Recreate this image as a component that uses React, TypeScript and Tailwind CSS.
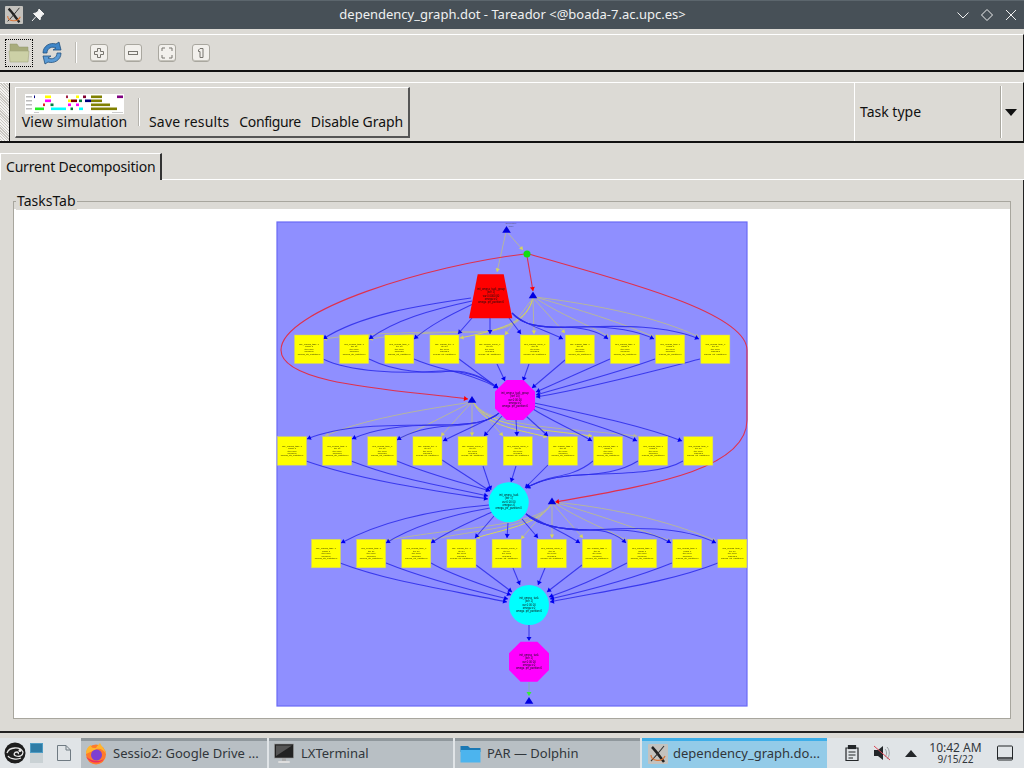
import React from "react";

const BLUE = "#2a2aea";
const GREY = "#b5b5a0";
const YEL = "#d6d65a";
const RED = "#e0304c";

const row1 = Array.from({ length: 10 }, (_, i) => 294.5 + i * 45.15);
const row2 = Array.from({ length: 10 }, (_, i) => 277.5 + i * 45.15);
const row3 = Array.from({ length: 10 }, (_, i) => 311.5 + i * 45.15);

const labels = [
  ["lib1_ompss_task_0", "'class' 1", "iter 0000", "omega:s", "omega_ptr_partition:0"],
  ["lib1_ompss_task_0", "iter 10", "iter 0000", "omega:s", "omega_ptr_partition:0"],
  ["lib1_ompss_task_0", "iter 10", "iter 0000", "omega:s", "omega_ptr_partition:0"],
  ["lib1_ompss_iter_1", "iter 10", "iter 0000", "omega:s", "omega_ptr_partition:0"],
  ["lib1_ompss_comp_0", "iter 10", "iter 0000", "omega:s", "omega_ptr_partition:0"],
  ["lib1_ompss_comp_0", "iter 10", "iter 0000", "omega:s", "omega_ptr_partition:0"],
  ["lib1_ompss_task_0", "iter 10", "iter 0000", "omega:s", "omega_ptr_partition:0"],
  ["lib1_ompss_task_0", "'class' 1", "iter 0000", "omega:s", "omega_ptr_partition:0"],
  ["lib1_ompss_task_0", "'class' 1", "iter 0000", "omega:s", "omega_ptr_partition:0"],
  ["lib1_ompss_task_0", "iter 10", "iter 0000", "omega:s", "omega_ptr_partition:0"],
];

const blueEdges = [
  // trapezoid to row 1
  "M471 298 C420 305 360 315 323 339",
  "M472 301 C430 310 395 320 369 339",
  "M473 304 C450 315 430 325 414 339",
  "M472 318 L458 334",
  "M490 318 L490 334",
  "M509 318 L521 334",
  "M512 313 C525 325 545 330 563 339",
  "M512 313 C522 325 540 328 560 327 C580 327 597 330 608 339",
  "M512 313 C522 325 540 328 570 327 C600 326 632 328 654 339",
  "M512 313 C522 325 540 328 570 327 C600 327 660 322 699 339",
  // row 1 to magenta
  "M323 359 C350 372 400 374 440 371 C465 370 485 378 498 388",
  "M369 359 C395 372 430 374 450 371 C470 370 485 378 498 388",
  "M414 359 C440 371 470 372 498 388",
  "M459 359 L498 388",
  "M497 364 L505 381",
  "M529 364 L523 381",
  "M565 360 L532 388",
  "M610 359 L536 392",
  "M655 359 C620 372 570 385 536 395",
  "M700 359 C650 372 590 388 536 397",
  // magenta to row 2
  "M499 413 C490 422 470 425 440 425 C390 425 340 425 307 439",
  "M499 413 C490 422 470 425 440 425 C410 425 375 428 352 439",
  "M499 413 C490 422 470 425 450 426 C430 427 410 432 397 440",
  "M498 414 C480 424 460 432 443 441",
  "M502 416 L484 436",
  "M516 420 L517 436",
  "M526 416 L548 436",
  "M533 409 C550 420 570 428 592 441",
  "M534 406 C570 418 610 428 637 441",
  "M534 403 C590 415 640 425 682 441",
  // row 2 to cyan
  "M306 461 C360 480 430 490 488 499",
  "M351 461 C400 480 440 485 488 496",
  "M397 461 C430 475 460 482 490 491",
  "M442 460 L490 491",
  "M483 466 L491 490",
  "M516 466 L511 482",
  "M548 465 L525 488",
  "M593 461 C580 472 565 475 555 477 C545 479 535 483 526 488",
  "M638 461 C620 472 600 474 580 475 C560 476 540 480 526 488",
  "M683 461 C660 475 610 473 580 475 C560 476 540 480 526 488",
  // cyan to row 3
  "M489 505 C430 510 380 522 341 543",
  "M490 508 C450 515 415 525 386 543",
  "M492 512 C470 522 450 530 431 543",
  "M494 516 L475 538",
  "M508 523 L507 538",
  "M522 519 L538 538",
  "M526 514 C540 522 560 530 580 543",
  "M526 514 C538 525 560 530 590 530 C605 530 618 535 626 543",
  "M526 514 C538 525 560 530 590 530 C620 529 650 530 671 543",
  "M526 514 C538 525 560 530 590 530 C630 528 680 525 716 543",
  // row 3 to cyan 2
  "M340 563 C390 582 450 590 507 602",
  "M386 563 C420 577 470 590 508 599",
  "M431 563 C455 577 485 585 511 595",
  "M476 565 L512 592",
  "M513 568 L520 585",
  "M545 568 L538 585",
  "M582 565 L547 592",
  "M627 563 C600 577 575 588 549 597",
  "M672 563 C630 580 590 590 550 599",
  "M718 563 C670 582 610 590 550 602",
];

const grayEdges = [
  { d: "M506 232 L497 272", c: GREY, a: YEL },
  { d: "M507 232 L523 250", c: GREY, a: YEL },
  { d: "M533 298 C527 320 510 330 480 332 C430 332 370 332 323 339", c: GREY, a: YEL },
  { d: "M533 298 C527 320 510 330 480 332 C450 332 410 333 369 339", c: GREY, a: YEL },
  { d: "M533 298 C527 320 510 328 460 338", c: YEL, a: YEL },
  { d: "M533 298 L505 335", c: GREY, a: YEL },
  { d: "M533 298 L534 334", c: GREY, a: YEL },
  { d: "M533 298 L565 333", c: GREY, a: YEL },
  { d: "M534 297 C560 315 590 325 609 337", c: GREY, a: GREY },
  { d: "M535 297 C580 310 620 322 654 337", c: GREY, a: GREY },
  { d: "M535 297 C600 305 660 318 699 337", c: GREY, a: GREY },
  { d: "M472 402 C420 410 360 420 325 436", c: GREY, a: GREY },
  { d: "M472 402 L397 440", c: GREY, a: GREY },
  { d: "M472 402 L441 436", c: GREY, a: YEL },
  { d: "M472 402 L472 436", c: GREY, a: YEL },
  { d: "M473 402 L503 436", c: GREY, a: YEL },
  { d: "M473 402 C485 425 510 428 547 437", c: YEL, a: YEL },
  { d: "M473 402 C490 428 540 429 592 436", c: YEL, a: YEL },
  { d: "M473 402 C490 428 570 428 637 436", c: GREY, a: GREY },
  { d: "M552 503 C540 525 500 530 476 538", c: YEL, a: YEL },
  { d: "M552 503 C540 528 470 530 431 540", c: GREY, a: GREY },
  { d: "M552 503 C540 528 440 528 386 541", c: GREY, a: GREY },
  { d: "M552 503 L521 539", c: GREY, a: YEL },
  { d: "M552 503 L552 538", c: GREY, a: YEL },
  { d: "M552 503 L583 538", c: GREY, a: YEL },
  { d: "M553 502 C580 520 610 530 627 541", c: GREY, a: GREY },
  { d: "M553 502 C600 515 640 530 671 541", c: GREY, a: GREY },
  { d: "M553 502 C620 508 680 525 716 541", c: GREY, a: GREY },
];

function arrow(d: string, color: string, size = 2.2) {
  const n = (d.match(/-?\d+(\.\d+)?/g) || []).map(Number);
  const l = n.length;
  const [x0, y0, x1, y1] = [n[l - 4], n[l - 3], n[l - 2], n[l - 1]];
  const a = Math.atan2(y1 - y0, x1 - x0);
  const bx = x1 - Math.cos(a) * size * 1.6;
  const by = y1 - Math.sin(a) * size * 1.6;
  const px = -Math.sin(a) * size;
  const py = Math.cos(a) * size;
  return <polygon points={`${x1},${y1} ${bx + px},${by + py} ${bx - px},${by - py}`} fill={color} />;
}

function Tri({ x, y }: { x: number; y: number }) {
  return <polygon points={`${x},${y - 4} ${x + 4.3},${y + 2.8} ${x - 4.3},${y + 2.8}`} fill="#0000e0" />;
}

function NodeText({ x, y, lines, big }: { x: number; y: number; lines: string[]; big?: boolean }) {
  const gap = big ? 3.3 : 2.4;
  return (
    <text x={x} y={y} fontSize={big ? 2.7 : 2.35} fontFamily="Liberation Sans, sans-serif" fill={big ? "#101010" : "#303000"} textAnchor="middle">
      {lines.map((t, i) => (
        <tspan key={i} x={x} y={y + i * gap}>
          {t}
        </tspan>
      ))}
    </text>
  );
}

function octagon(cx: number, cy: number, r: number) {
  const k = r * 0.42;
  return [
    [cx - k, cy - r], [cx + k, cy - r], [cx + r, cy - k], [cx + r, cy + k],
    [cx + k, cy + r], [cx - k, cy + r], [cx - r, cy + k], [cx - r, cy - k],
  ].map((p) => p.join(",")).join(" ");
}

function Graph() {
  const nodeLines = ["init_ompss_task", "(iter 1)", "var:0 00 00", "omega:s:0", "omega_ptr_partition:0"];
  return (
    <svg width="472" height="486" viewBox="276 221 472 486" className="block blur-[0.35px]">
      <rect x="277" y="222" width="470" height="484" fill="#8f8fff" stroke="#6a6af6" strokeWidth="1.2" />
      <text x="511" y="224" fontSize="2.4" fill="#555577" textAnchor="middle" fontFamily="Liberation Sans, sans-serif">
        Execution
      </text>
      <text x="511" y="226.5" fontSize="2.4" fill="#555577" textAnchor="middle" fontFamily="Liberation Sans, sans-serif">
        start
      </text>

      {grayEdges.map((e, i) => (
        <g key={i}>
          <path d={e.d} fill="none" stroke={e.c} strokeWidth="1" />
          {arrow(e.d, e.a)}
        </g>
      ))}
      {blueEdges.map((d, i) => (
        <g key={i}>
          <path d={d} fill="none" stroke={BLUE} strokeWidth="1.05" opacity="0.85" />
          {arrow(d, "#0000f0", 2.5)}
        </g>
      ))}

      <path d="M525 254 C430 265 281 310 281 350 C281 385 400 390 468 399" fill="none" stroke={RED} strokeWidth="1.1" />
      <path d="M529 254 C600 275 747 310 747 350 L747 420 C747 470 650 485 556 502" fill="none" stroke={RED} strokeWidth="1.1" />
      <path d="M527 256 L533 291" fill="none" stroke={RED} strokeWidth="1.1" />
      {arrow("M460 398 L468 399", "#ff0000", 2.5)}
      {arrow("M562 501 L555 502", "#ff0000", 2.5)}
      {arrow("M532 285 L533 291", "#ff0000", 2.5)}

      <path d="M529 625 L529 640" stroke="#5c5cf0" strokeWidth="1.8" />
      {arrow("M529 636 L529 641", "#0a0ae8", 2.5)}
      <path d="M529 682 L529 696" stroke="#7fb0b0" strokeWidth="1" />
      {arrow("M529 692 L529 696", "#33ee33", 2.5)}

      <polygon points="477.7,274.3 503.7,274.3 512.3,318.3 469,318.3" fill="#ff0000" />
      <NodeText big x={491} y={290} lines={["init_ompss_task_group", "(iter 1)", "var:0 0000 00", "omega:s:0", "omega_ptr_partition:0"]} />
      <circle cx="527" cy="254" r="3.5" fill="#11dd11" />

      <Tri x={506.5} y={230} />
      <Tri x={533} y={295.5} />
      <Tri x={472} y={400} />
      <Tri x={552} y={501.5} />
      <Tri x={529} y={701} />

      {[...row1.map((x, i) => ({ x, y: 335, i, k: 0 })), ...row2.map((x, i) => ({ x, y: 436.7, i, k: 1 })), ...row3.map((x, i) => ({ x, y: 539.3, i, k: 2 }))].map((n) => (
        <g key={`${n.k}-${n.i}`}>
          <rect x={n.x} y={n.y} width="29" height="28.5" fill="#ffff00" stroke="#d0d070" strokeWidth="0.5" />
          <NodeText x={n.x + 14.5} y={n.y + 10} lines={labels[n.i]} />
        </g>
      ))}

      <polygon points={octagon(515, 400, 20)} fill="#ff00ff" />
      <NodeText big x={515} y={394} lines={["init_ompss_task_group", "(iter 10)", "var:0 00 00", "omega:s:0", "omega_ptr_partition:0"]} />
      <circle cx="508.7" cy="502.3" r="20" fill="#00ffff" />
      <NodeText big x={508.7} y={496} lines={nodeLines} />
      <circle cx="529" cy="605" r="20" fill="#00ffff" />
      <NodeText big x={529} y={599} lines={nodeLines} />
      <polygon points={octagon(529, 661.7, 20)} fill="#ff00ff" />
      <NodeText big x={529} y={656} lines={nodeLines} />
    </svg>
  );
}

function Thumb() {
  const bars: [number, number, number, string][] = [
    [34, 35, 95.5, "#000080"], [45, 51, 95.5, "#ffff00"], [66, 68, 95.5, "#a02040"], [76, 79, 95.5, "#ffff00"], [83, 86, 95.5, "#800030"], [91, 102, 95.5, "#808000"], [117, 123, 95.5, "#800080"],
    [45, 51, 99.5, "#ff00ff"], [68, 71, 99.5, "#ffff00"], [71, 77, 99.5, "#800000"], [79, 82, 99.5, "#008040"], [85, 91, 99.5, "#000080"], [91, 102, 99.5, "#808000"],
    [43, 45, 103.5, "#e02020"], [50.5, 53.5, 103.5, "#008040"], [68, 71, 103.5, "#ff00ff"], [76, 79, 103.5, "#ff00ff"], [91, 110, 103.5, "#808000"],
    [35, 44, 107.5, "#22ee22"], [51, 66, 107.5, "#00ffff"], [70.5, 73, 107.5, "#008040"], [79, 83, 107.5, "#00ffff"], [91, 117, 107.5, "#808000"],
  ];
  return (
    <svg width="99" height="20" viewBox="25 94 99 20" className="block bg-white">
      {bars.map((b, i) => (
        <rect key={i} x={b[0]} y={b[2]} width={b[1] - b[0]} height="2.6" fill={b[3]} />
      ))}
      {[96, 100, 104, 108].map((y) => (
        <rect key={y} x="26" y={y} width="6" height="1.5" fill="#bbbbbb" />
      ))}
      <rect x="34" y="112" width="5" height="1" fill="#cccccc" />
      <rect x="112" y="112" width="11" height="1" fill="#cccccc" />
    </svg>
  );
}

function ZoomBtn({ children }: { children: React.ReactNode }) {
  return (
    <div className="w-[18px] h-[18px] rounded-[3px] bg-[#f2f0ec] border border-[#a9a79f] shadow-[inset_0_-1px_0_#c4c2ba] flex items-center justify-center">
      <svg width="14" height="14" viewBox="0 0 14 14" fill="none" stroke="#77756f" strokeWidth="1">
        {children}
      </svg>
    </div>
  );
}

function XIcon({ size = 20 }: { size?: number }) {
  return (
    <svg width={size} height={size} viewBox="0 0 20 20" className="block shrink-0">
      <rect width="20" height="20" rx="1" fill="#c4c2be" />
      <path d="M4 3 C8 7 12 13 16 18" stroke="#222" strokeWidth="2.6" fill="none" />
      <path d="M16 2 C12 7 8 12 3 17" stroke="#333" strokeWidth="1.1" fill="none" />
      <path d="M3 11 C3 17 14 19 17 12" stroke="#d8763a" strokeWidth="1.2" fill="none" />
    </svg>
  );
}

export default function App() {
  const ui = "font-['Noto_Sans',sans-serif]";
  return (
    <div className={`w-[1024px] h-[768px] overflow-hidden flex flex-col bg-[#dcdad5] text-[#111] ${ui}`}>
      {/* Title bar */}
      <div className="h-[29px] shrink-0 bg-[#475057] border-t border-[#5c666d] flex items-center">
        <div className="ml-[5px]"><XIcon size={18} /></div>
        <svg width="14" height="14" viewBox="0 0 14 14" className="ml-[8px]">
          <path d="M8 1 L13 6 L11.5 6.8 L9.5 9.5 L9 12 L2.5 5.5 L5 5 L7.5 3 Z M5 8.5 L1 13" fill="#f4f4f4" stroke="#f4f4f4" strokeWidth="1" />
        </svg>
        <div className="flex-1 text-center text-[13px] text-[#eff0f1] pl-[24px]">
          dependency_graph.dot - Tareador &lt;@boada-7.ac.upc.es&gt;
        </div>
        <div className="flex items-center gap-[10px] pr-[6px]">
          <svg width="14" height="14" viewBox="0 0 14 14" fill="none" stroke="#f0f0f0" strokeWidth="1"><path d="M1.5 4.5 L7 10 L12.5 4.5" /></svg>
          <svg width="14" height="14" viewBox="0 0 14 14" fill="none" stroke="#f0f0f0" strokeWidth="1"><path d="M7 1.5 L12.5 7 L7 12.5 L1.5 7 Z" /></svg>
          <svg width="14" height="14" viewBox="0 0 14 14" fill="none" stroke="#f0f0f0" strokeWidth="1"><path d="M2 2 L12 12 M12 2 L2 12" /></svg>
        </div>
      </div>

      {/* Main toolbar */}
      <div className="mt-[5px] h-[38px] shrink-0 border-t border-white border-b-2 border-b-[#111] border-r border-r-[#111] flex items-center pl-[5px]">
        <div className="w-[28px] h-[28px] border border-dotted border-black flex items-center justify-center">
          <svg width="24" height="22" viewBox="0 0 24 22">
            <path d="M3 2 H10 L12 5 H21 V10 H3 Z" fill="#a8ac7c" stroke="#93966c" strokeWidth="0.5" />
            <path d="M2 9 H22 L21 20 H3 Z" fill="#ccd0a6" stroke="#a3a67f" strokeWidth="0.6" />
          </svg>
        </div>
        <svg width="22" height="24" viewBox="0 0 22 24" className="ml-[8px]">
          <path d="M2 12 C2 5 9 1 15 3 L18 1 L20 9 L12 9 L15 7 C11 5 6 7 6 12 Z" fill="#3f86c8" stroke="#22507e" strokeWidth="0.8" />
          <path d="M20 12 C20 19 13 23 7 21 L4 23 L2 15 L10 15 L7 17 C11 19 16 17 16 12 Z" fill="#5a9bd6" stroke="#22507e" strokeWidth="0.8" />
        </svg>
        <div className="ml-[12px] w-[2px] h-[21px] bg-[#bdbbb5] border-r border-white" />
        <div className="ml-[13px] flex items-center gap-[16px]">
          <ZoomBtn><path d="M5.5 2.5 H8.5 V5.5 H11.5 V8.5 H8.5 V11.5 H5.5 V8.5 H2.5 V5.5 H5.5 Z" /></ZoomBtn>
          <ZoomBtn><rect x="2.5" y="5.5" width="9" height="3" /></ZoomBtn>
          <ZoomBtn><path d="M2 5 V2 H5 M9 2 H12 V5 M12 9 V12 H9 M5 12 H2 V9" /></ZoomBtn>
          <ZoomBtn><path d="M6 2.5 H9 V11.5 H6 V5.5 H4.5 V4 Z" /></ZoomBtn>
        </div>
      </div>

      {/* Second toolbar */}
      <div className="mt-[10px] h-[61px] shrink-0 border-t border-white border-b-2 border-b-[#111] border-r border-r-[#111] flex items-stretch">
        <div className="w-[9px] bg-[repeating-linear-gradient(45deg,#f4f3f0_0px,#f4f3f0_1px,#c9c7c1_1px,#c9c7c1_2px)]" />
        <div className="w-px bg-[#111]" />
        <div className="flex-none w-[844px] pl-[5px] pt-[4px]">
          <div className="w-[395px] h-[51px] border-t border-l border-white border-b-2 border-r-2 border-b-[#555] border-r-[#555] flex items-start pl-[6px]">
            <div className="flex flex-col items-center w-[105px]">
              <div className="mt-[6px]"><Thumb /></div>
              <div className="text-[14px] leading-[19px] mt-[-2px] whitespace-nowrap tracking-[0.13px]">View simulation</div>
            </div>
            <div className="w-[2px] h-[28px] mt-[10px] ml-[11px] bg-[#b5b3ad] border-r border-white" />
            <div className="ml-[9px] mt-[24px] flex gap-[10px] text-[14px] leading-[19px] whitespace-nowrap">
              <span className="tracking-[0.17px]">Save results</span>
              <span className="tracking-[-0.4px]">Configure</span>
              <span className="tracking-[-0.05px]">Disable Graph</span>
            </div>
          </div>
        </div>
        <div className="flex-1 border-l border-white flex items-center pl-[5px] text-[14px]">
          <span className="mb-[2px]">Task type</span>
          <div className="ml-auto mr-[3px] w-[2px] h-[52px] bg-[#a9a79f] border-r border-white" />
          <svg width="12" height="7" viewBox="0 0 12 7" className="mr-[6px]">
            <path d="M0 0 H12 L6 7 Z" fill="#111" />
          </svg>
        </div>
      </div>

      {/* Tab header */}
      <div className="mt-[10px] h-[27px] shrink-0 flex">
        <div className="w-[162px] border-t border-white border-l border-l-white border-r-2 border-r-[#333] pl-[5px] text-[14px] leading-[26px] tracking-[-0.2px] whitespace-nowrap">
          Current Decomposition
        </div>
        <div className="flex-1 border-b border-white" />
      </div>

      {/* Tab panel */}
      <div className="h-[553px] shrink-0 border-b-2 border-b-[#222] border-r border-r-[#222] pl-[13px] pr-[12px] pt-[21px] flex flex-col">
        <div className="relative h-[518px] border border-[#a8a69e] flex flex-col">
          <span className="absolute left-[2px] top-[-10px] px-[1px] bg-[#dcdad5] text-[14px] leading-[18px]">TasksTab</span>
          <div className="mt-[7px] flex-1 bg-white flex justify-center pt-[12px]">
            <Graph />
          </div>
        </div>
      </div>

      {/* Taskbar */}
      <div className="mt-[5px] h-[30px] shrink-0 bg-[#e0e4e7] flex items-stretch text-[13px] text-[#31363b]">
        <div className="w-[81px] shrink-0 flex items-center pl-[4px]">
          <svg width="22" height="22" viewBox="0 0 22 22">
            <circle cx="11" cy="11" r="10.5" fill="#1d1d1d" />
            <path d="M3 11 C5 5 16 4 19 10 C19 14 15 15 12 14 C9 13 10 10 13 10 C14 10 15 11 14 12 M4 14 C6 17 13 18 17 16" stroke="#e8e8e8" strokeWidth="1.3" fill="none" />
            <circle cx="16" cy="8.5" r="1.5" fill="#e8e8e8" />
          </svg>
          <div className="ml-[4px] w-[13px] h-[20px] flex flex-col">
            <div className="h-[10px] bg-[#2e7ca6] border border-[#4e9cc4]" />
            <div className="h-[10px] bg-[#c9d1d4]" />
          </div>
          <svg width="16" height="18" viewBox="0 0 16 18" className="ml-[13px]" fill="none" stroke="#6f7a82" strokeWidth="1">
            <path d="M1.5 1.5 H10 L14.5 6 V16.5 H1.5 Z M10 1.5 V6 H14.5" />
          </svg>
        </div>

        {[
          { w: 186, t: "Sessio2: Google Drive ...", ic: "ff" },
          { w: 184, t: "LXTerminal", ic: "term" },
          { w: 185, t: "PAR — Dolphin", ic: "folder" },
        ].map((b) => (
          <div key={b.t} style={{ width: b.w }} className="shrink-0 mr-[2px] bg-[#b8bfc4] border-t-[3px] border-[#8f979c] flex items-center pl-[4px] pb-[2px] whitespace-nowrap">
            <div className="w-[22px] h-[22px] flex items-center justify-center">
              {b.ic === "ff" && (
                <svg width="22" height="23" viewBox="0 0 22 23">
                  <circle cx="11" cy="12.5" r="10" fill="#ff7a2a" />
                  <path d="M1 12 C1 6 4 4 6 3 C6 6 8 6 11 6 C12 4 14 2 15 1 C16 4 20 6 21 12 C19 8 15 6 12 7 Z" fill="#ffb52e" />
                  <circle cx="11.5" cy="13" r="5.5" fill="#7e3fd0" />
                  <path d="M1.5 15 C4 21 14 23 19 17 C15 20 7 20 1.5 15 Z" fill="#ee2c5e" />
                </svg>
              )}
              {b.ic === "term" && (
                <svg width="20" height="21" viewBox="0 0 20 21">
                  <rect x="0.5" y="1" width="19" height="14" fill="#222" stroke="#999" strokeWidth="0.6" />
                  <path d="M2 2.5 H18 L2 13 Z" fill="#555" />
                  <rect x="8" y="15" width="4" height="3" fill="#aaa" />
                  <rect x="4" y="18" width="12" height="2" rx="1" fill="#ddd" />
                </svg>
              )}
              {b.ic === "folder" && (
                <svg width="21" height="18" viewBox="0 0 21 18">
                  <path d="M0.5 1 H8 L10 3 H20.5 V7 H0.5 Z" fill="#1a78b4" />
                  <path d="M0.5 5 H20.5 V17.5 H0.5 Z" fill="#4cb4ee" />
                </svg>
              )}
            </div>
            <span className="ml-[6px]">{b.t}</span>
          </div>
        ))}

        <div className="w-[185px] shrink-0 bg-[#93cbe8] border-t-[3px] border-[#3daee9] flex items-center pl-[6px] pb-[2px] whitespace-nowrap">
          <XIcon size={20} />
          <span className="ml-[5px]">dependency_graph.do...</span>
        </div>

        <div className="flex-1 flex items-center pl-[18px]">
          <svg width="14" height="16" viewBox="0 0 14 16" fill="none" stroke="#232629" strokeWidth="1.2">
            <path d="M1 3 H13 V15.5 H1 Z" />
            <rect x="3.5" y="0.5" width="7" height="3" fill="#232629" />
            <path d="M3.5 7 H10.5 M3.5 10 H10.5 M3.5 13 H8" />
          </svg>
          <svg width="18" height="16" viewBox="0 0 18 16" className="ml-[14px]">
            <path d="M1 5 H5 L10 1 V15 L5 11 H1 Z" fill="#232629" />
            <path d="M12 4 C14 6 14 10 12 12 M14 2 C17 5 17 11 14 14" stroke="#9aa0a4" strokeWidth="1" fill="none" />
            <path d="M1 1 L17 15" stroke="#da4453" strokeWidth="1" />
          </svg>
          <svg width="12" height="7" viewBox="0 0 12 7" className="ml-[14px]">
            <path d="M0 7 L6 0 L12 7 Z" fill="#232629" />
          </svg>
          <div className="ml-[12px] w-[53px] flex flex-col items-center leading-none">
            <span className="text-[12px] leading-[12px] whitespace-nowrap">10:42 AM</span>
            <span className="text-[10px] leading-[10px] whitespace-nowrap">9/15/22</span>
          </div>
          <svg width="16" height="16" viewBox="0 0 16 16" className="ml-[15px]" fill="none" stroke="#232629" strokeWidth="1">
            <rect x="0.5" y="1" width="15" height="14" rx="1" />
            <path d="M1 13 H15" strokeWidth="1.5" />
          </svg>
        </div>
      </div>
    </div>
  );
}
